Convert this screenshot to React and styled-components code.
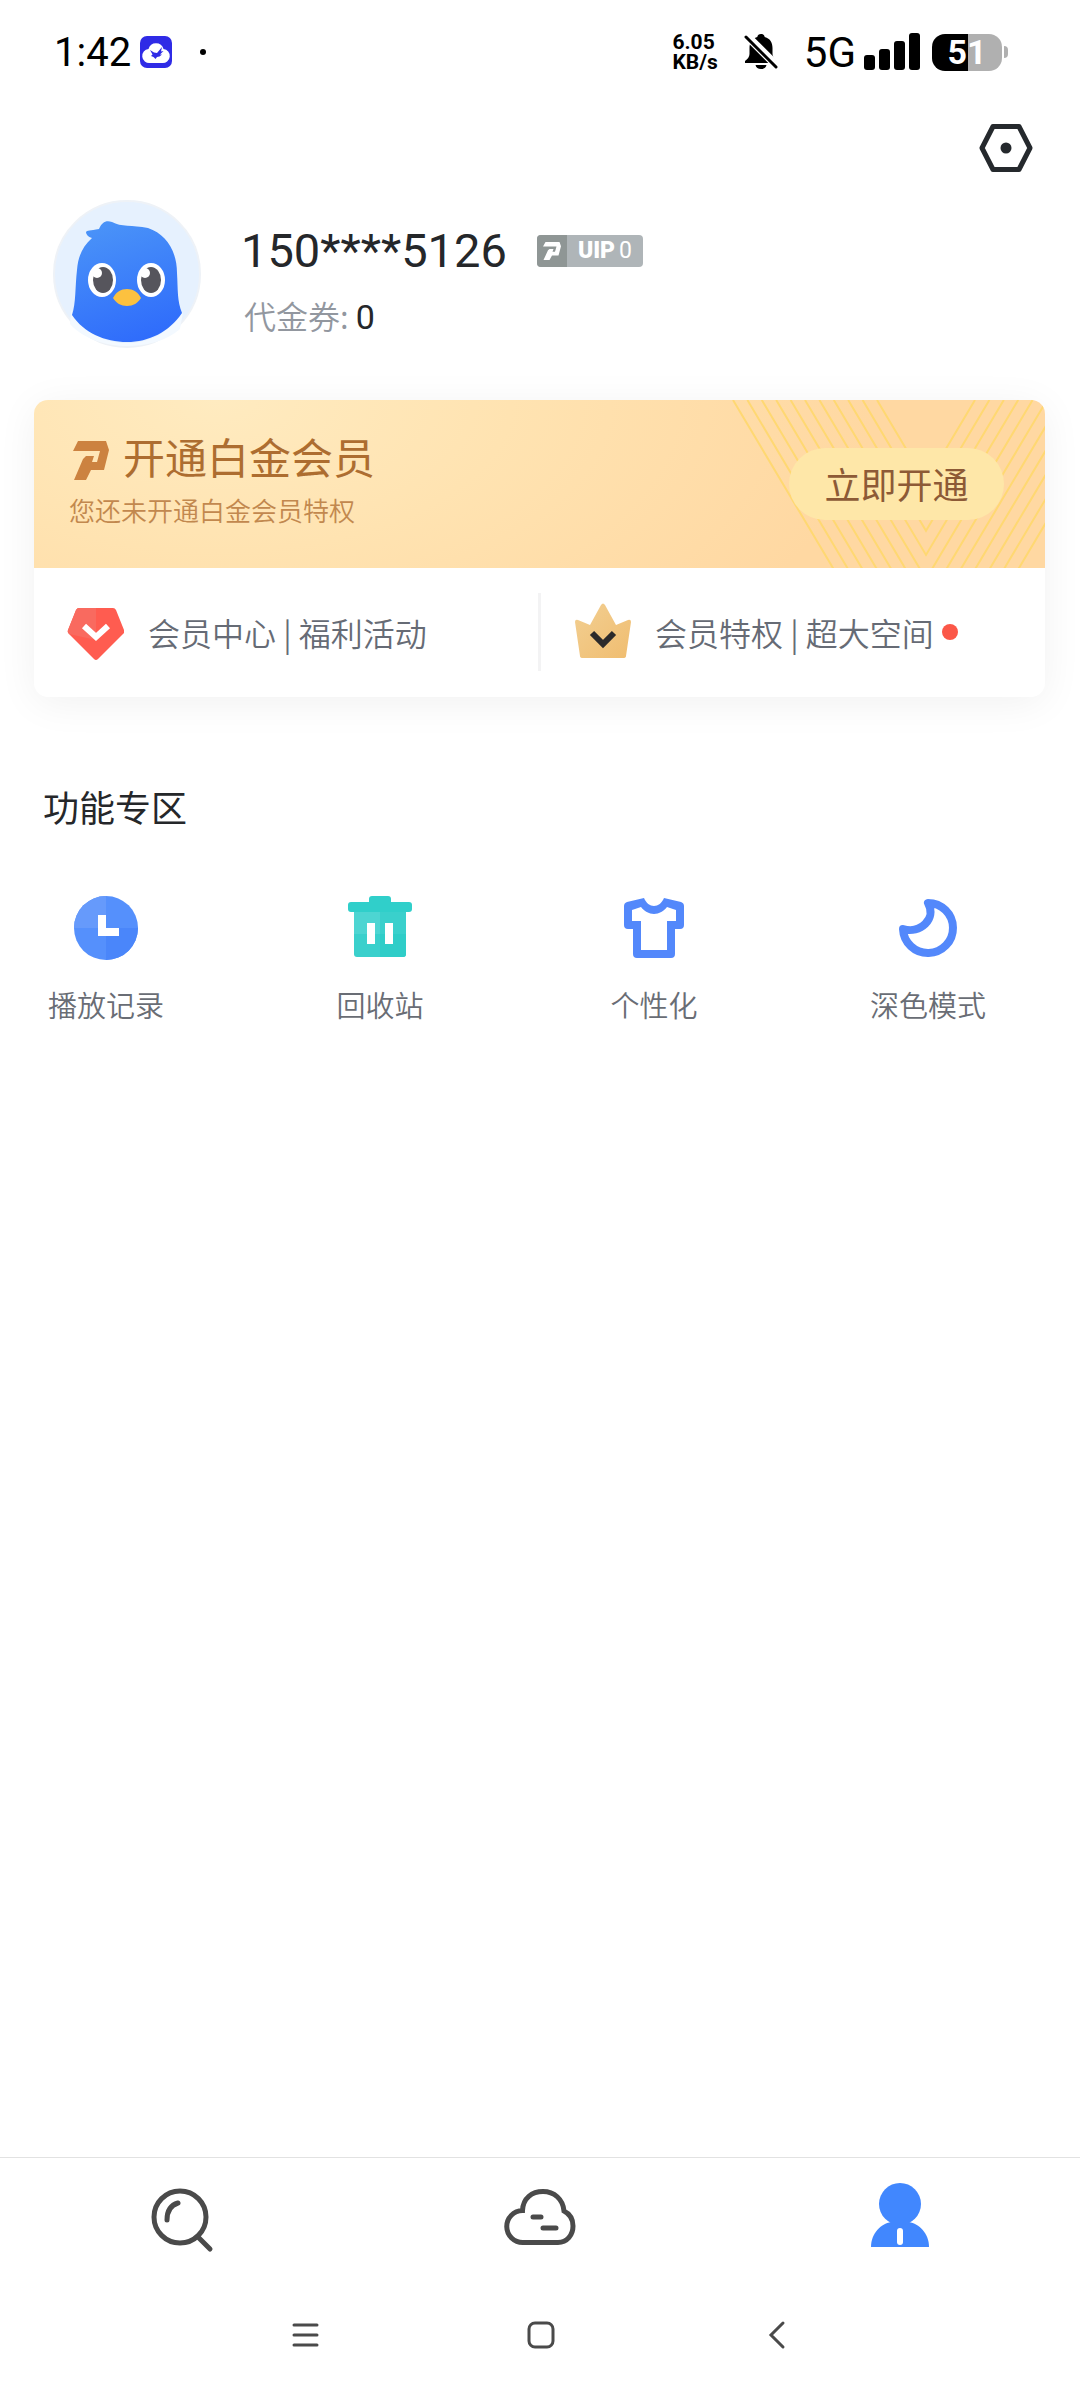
import styled, { createGlobalStyle } from "styled-components";

export default function App() {
    return (
        <>
            <GlobalStyle />
            <Page>
                <StatusBar>
                    <StatusGroup>
                        <Clock>1:42</Clock>
                        <CloudAppIcon />
                        <NoticeDot />
                    </StatusGroup>
                    <StatusGroup>
                        <Speed>
                            <span>6.05</span>
                            <span>KB/s</span>
                        </Speed>
                        <BellOffIcon />
                        <Network>5G</Network>
                        <SignalIcon />
                        <Battery>
                            <BatteryBody>51</BatteryBody>
                            <BatteryNub />
                        </Battery>
                    </StatusGroup>
                </StatusBar>

                <Toolbar>
                    <IconButton aria-label="设置">
                        <SettingsIcon />
                    </IconButton>
                </Toolbar>

                <Profile>
                    <Avatar />
                    <ProfileInfo>
                        <PhoneRow>
                            <Phone>150****5126</Phone>
                            <VipBadge>
                                <VipMark>
                                    <PMark width="18" height="18" color="#fff" />
                                </VipMark>
                                <VipText>
                                    <b>UIP</b>0
                                </VipText>
                            </VipBadge>
                        </PhoneRow>
                        <Coupon>
                            代金券: <span>0</span>
                        </Coupon>
                    </ProfileInfo>
                </Profile>

                <MemberCard>
                    <Banner>
                        <Stripes />
                        <BannerText>
                            <BannerTitle>
                                <PMark width="36" height="39" color="#cc8240" />
                                开通白金会员
                            </BannerTitle>
                            <BannerSub>您还未开通白金会员特权</BannerSub>
                        </BannerText>
                        <OpenButton>立即开通</OpenButton>
                    </Banner>
                    <MemberLinks>
                        <MemberLink href="#center">
                            <GemIcon />
                            会员中心 | 福利活动
                        </MemberLink>
                        <Divider />
                        <MemberLink href="#rights">
                            <CrownIcon />
                            <span>会员特权 | 超大空间</span>
                            <RedDot />
                        </MemberLink>
                    </MemberLinks>
                </MemberCard>

                <Section>
                    <SectionTitle>功能专区</SectionTitle>
                    <FeatureList>
                        {features.map(({ label, Icon }) => (
                            <Feature key={label}>
                                <Icon />
                                {label}
                            </Feature>
                        ))}
                    </FeatureList>
                </Section>

                <TabBar>
                    <Tab aria-label="搜索"><SearchIcon /></Tab>
                    <Tab aria-label="云盘"><CloudIcon /></Tab>
                    <Tab aria-label="我的"><PersonIcon /></Tab>
                </TabBar>
                <SystemNav>
                    <SystemButton aria-label="菜单"><MenuIcon /></SystemButton>
                    <SystemButton aria-label="主页"><HomeIcon /></SystemButton>
                    <SystemButton aria-label="返回"><BackIcon /></SystemButton>
                </SystemNav>
            </Page>
        </>
    )
}

function CloudAppIcon() {
    return (
        <svg width="32" height="32" viewBox="0 0 32 32">
            <rect width="32" height="32" rx="7" fill="#2f2be6" />
            <path d="M10 27a7 7 0 0 1-1.500-14a7.800 7.800 0 0 1 15 0A7 7 0 0 1 22 27z" fill="#fff" />
            <path d="M10 14L14 16.500L17 17L22 11L21 15.500L23.500 15L20 18.500H22L19.500 20.500L17 21L15.500 23L13.500 21L11 20L12.500 18.500z" fill="#2f2be6" />
        </svg>
    )
}

function BellOffIcon() {
    return (
        <BellSvg width="34" height="36" viewBox="0 0 34 36">
            <path d="M17 0c-2 0-3.500 1.300-3.700 3C7.500 4.600 5.500 9 5.500 14v6c0 3-2 5-4.500 7v2h32v-2c-2.500-2-4.500-4-4.500-7v-6c0-5-2-9.400-7.800-11C20.500 1.300 19 0 17 0z" fill="#000" />
            <path d="M11.500 31h11a5.600 5 0 0 1-11 0z" fill="#000" />
            <path d="M0-1L36 35" stroke="#fff" strokeWidth="8" />
            <path d="M2 3L32 33" stroke="#000" strokeWidth="3" strokeLinecap="round" />
        </BellSvg>
    )
}

function SignalIcon() {
    return (
        <SignalSvg width="56" height="38" viewBox="0 0 56 38">
            <rect x="0" y="22" width="11" height="15" rx="3" />
            <rect x="15" y="16" width="11" height="21" rx="3" />
            <rect x="30" y="8" width="11" height="29" rx="3" />
            <rect x="45" y="0" width="11" height="37" rx="3" />
        </SignalSvg>
    )
}

function SettingsIcon() {
    return (
        <svg width="54" height="48" viewBox="0 0 54 48" fill="none">
            <path d="M14 2.500h26L51 24 40 45.500H14L3 24z" stroke="#25292d" strokeWidth="5" strokeLinejoin="round" />
            <circle cx="27" cy="24" r="5.500" fill="#25292d" />
        </svg>
    )
}

function Avatar() {
    return (
        <svg width="148" height="148" viewBox="0 0 148 148">
            <defs>
                <linearGradient id="bird" x1="0.300" y1="0" x2="0.600" y2="1">
                    <stop offset="0" stopColor="#4a93f8" />
                    <stop offset="1" stopColor="#2f6cfb" />
                </linearGradient>
            </defs>
            <circle cx="74" cy="74" r="73" fill="#e6f1fe" stroke="#eef2f7" strokeWidth="2" />
            <path d="M18 110C34 134 52 143 74 143s42-10 56-31l-3 17C113 141 94 146 74 146S30 139 17 124z" fill="#f3f9ff" />
            <path d="M19 115C23 103 22 87 24 70C25 57 29 47 39 38C35 37 33 34 33 32C34 30 37 31 46 29C49 22 53 20 59 22C68 27 79 25 95 28C113 34 124 51 124 73C125 90 124 101 129 113C116 132 96 142 74 142S31 133 19 115z" fill="url(#bird)" />
            <ellipse cx="49" cy="80" rx="14" ry="17" fill="#fff" />
            <ellipse cx="98" cy="80" rx="14" ry="17" fill="#fff" />
            <ellipse cx="50" cy="80" rx="10" ry="13" fill="#56555c" />
            <ellipse cx="98" cy="80" rx="10" ry="13" fill="#56555c" />
            <circle cx="44" cy="73" r="5" fill="#fff" />
            <circle cx="92" cy="73" r="5" fill="#fff" />
            <path d="M60 98c3-6 8-9 14-9s11 3 14 9c-3 5-8 8-14 8s-11-3-14-8z" fill="#fcc13f" />
        </svg>
    )
}

function PMark({ width, height, color }) {
    return (
        <svg width={width} height={height} viewBox="0 0 36 39" preserveAspectRatio="none">
            <path d="M5 0H33L36 9L31 29H18L13 39H1L10 18L13 15H21L19 21H24L27 10H0z" fill={color} />
        </svg>
    )
}

function Stripes() {
    // nested V lines sharing one axis at x = 203
    const starts = Array.from({ length: 11 }, (_, i) => 10 + i * 14.4)
    return (
        <StripesSvg width="322" height="168" viewBox="0 0 322 168" fill="none" stroke="#ffd872" strokeWidth="2">
            {starts.map((x) => (
                <path key={x} d={`M${x} 0L203 ${(203 - x) * 1.68}L${406 - x} 0`} />
            ))}
        </StripesSvg>
    )
}

function GemIcon() {
    return (
        <svg width="58" height="58" viewBox="-1 -4 58 58">
            <path d="M12 1h34q2 0 3 2l8 20q1 2-1 4L31 52q-2 2-4 0L2 27q-2-2-1-4L9 3q1-2 3-2z" fill="#ff5c50" />
            <path d="M29 1H12q-2 0-3 2L1 23q-1 2 1 4l27 6z" fill="#f96a5f" />
            <path d="M17 19l12 11 12-11" fill="none" stroke="#fff" strokeWidth="6" />
        </svg>
    )
}

function CrownIcon() {
    return (
        <svg width="58" height="58" viewBox="-1 0 58 58">
            <defs>
                <linearGradient id="crown" x1="0" y1="0" x2="1" y2="1">
                    <stop offset="0" stopColor="#f2cf92" />
                    <stop offset="1" stopColor="#f0bd70" />
                </linearGradient>
            </defs>
            <path d="M27 2q2-3 4 0l11 20 12-5q3-1 3 2l-5 34q0 2-3 2H9q-3 0-3-2L1 19q0-3 3-2l12 5z" fill="url(#crown)" />
            <path d="M18 30l11 11 11-11" fill="none" stroke="#2c2a2a" strokeWidth="6" />
        </svg>
    )
}

function HistoryIcon() {
    return (
        <svg width="64" height="64" viewBox="0 0 64 64">
            <circle cx="32" cy="32" r="32" fill="#5590fc" />
            <path d="M32 0A32 32 0 0 0 0 32H32z" fill="#669afb" />
            <path d="M32 32H64A32 32 0 0 1 32 64z" fill="#4a86fa" />
            <path d="M24 19h8v13h13v8H24z" fill="#fff" />
        </svg>
    )
}

function TrashIcon() {
    return (
        <svg width="64" height="64" viewBox="0 0 64 64">
            <rect x="21" y="0" width="22" height="12" rx="3" fill="#30cfca" />
            <rect x="6" y="10" width="52" height="51" rx="3" fill="#3ad0cc" />
            <path d="M6 14h26v24H6z" fill="#4dd5d2" />
            <path d="M32 38h26v20q0 3-3 3H32z" fill="#2fcdc8" />
            <rect x="0" y="6" width="64" height="10" rx="3" fill="#30cfca" />
            <path d="M19 27h8v21h-8zM37 27h8v21h-8z" fill="#fff" />
        </svg>
    )
}

function ShirtIcon() {
    return (
        <svg width="64" height="64" viewBox="0 0 64 64">
            <path
                fill="#5388fb"
                fillRule="evenodd"
                d="M22 2C24 7 28 10 32 10S40 7 42 2L59 6Q62 7 62 10V29Q62 33 58 33H53V58Q53 62 49 62H15Q11 62 11 58V33H6Q2 33 2 29V10Q2 7 5 6zM19 11L10 14V25H19V54H45V25H54V14L45 11C42 15 37 18 32 18S22 15 19 11z"
            />
        </svg>
    )
}

function MoonIcon() {
    return (
        <svg width="64" height="64" viewBox="0 0 64 64" fill="none" stroke="#5388fb" strokeWidth="8" strokeLinejoin="round">
            <path d="M32 7A25 25 0 1 1 7 33C24 38 41 23 32 7z" />
        </svg>
    )
}

function SearchIcon() {
    return (
        <svg width="72" height="72" viewBox="0 0 72 72" fill="none" stroke="#4a4a4a" strokeWidth="5" strokeLinecap="round">
            <circle cx="36" cy="33" r="26" />
            <path d="M23 36C23 27 27 21 34 19" />
            <path d="M54 53L66 65" />
        </svg>
    )
}

function CloudIcon() {
    return (
        <svg width="72" height="72" viewBox="0 0 72 72" fill="none" stroke="#4a4a4a" strokeWidth="5" strokeLinecap="round">
            <path d="M19 58.500A16 16 0 0 1 18.500 26.500C19 14 28 7.500 39 7.500S59 15 60 27C66 30 69 36 69 42C69 51 63 58.500 54 58.500z" />
            <path d="M29 33h8M39 44h13" />
        </svg>
    )
}

function PersonIcon() {
    return (
        <svg width="72" height="72" viewBox="0 0 72 72" fill="#4187fe" overflow="visible">
            <circle cx="36" cy="20" r="21" />
            <path d="M7 63C7 49 17 40 27 38H45C55 40 65 49 65 63z" />
            <rect x="33" y="44" width="6" height="17" rx="3" fill="#fff" />
        </svg>
    )
}

function MenuIcon() {
    return (
        <svg width="32" height="32" viewBox="0 0 32 32" stroke="#4a4a4a" strokeWidth="3" strokeLinecap="round">
            <path d="M5 6h23M5 16h23M5 26h23" />
        </svg>
    )
}

function HomeIcon() {
    return (
        <svg width="32" height="32" viewBox="0 0 32 32">
            <rect x="4" y="4" width="24" height="24" rx="6" fill="none" stroke="#4a4a4a" strokeWidth="3" />
        </svg>
    )
}

function BackIcon() {
    return (
        <svg width="32" height="32" viewBox="0 0 32 32" fill="none" stroke="#4a4a4a" strokeWidth="3" strokeLinecap="round">
            <path d="M22 4L10 16L22 28" />
        </svg>
    )
}

const features = [
    { label: "播放记录", Icon: HistoryIcon },
    { label: "回收站", Icon: TrashIcon },
    { label: "个性化", Icon: ShirtIcon },
    { label: "深色模式", Icon: MoonIcon },
]

const GlobalStyle = createGlobalStyle`
    * {
        box-sizing: border-box;
    }

    body {
        margin: 0;
        background: #fff;
        font-family: Roboto, "Noto Sans CJK SC", sans-serif;
    }

    button {
        border: none;
        padding: 0;
        background: none;
        font-family: inherit;
    }

    svg {
        display: block;
        flex-shrink: 0;
    }
`

const Page = styled.div`
    min-height: 100vh;
    display: flex;
    flex-direction: column;
`

const StatusBar = styled.header`
    display: flex;
    justify-content: space-between;
    align-items: center;
    height: 104px;
    padding: 0 72px 0 54px;
    color: #000;
`

const StatusGroup = styled.div`
    display: flex;
    align-items: center;
`

const Clock = styled.span`
    margin-right: 9px;
    font-size: 40px;
`

const NoticeDot = styled.span`
    width: 6px;
    height: 6px;
    margin-left: 28px;
    border-radius: 50%;
    background: #000;
`

const Speed = styled.div`
    display: flex;
    flex-direction: column;
    font-size: 21px;
    font-weight: 700;
    line-height: 20px;
`

const BellSvg = styled.svg`
    margin: 0 26px;
`

const Network = styled.span`
    font-size: 42px;
`

const SignalSvg = styled.svg`
    margin: 0 12px 0 8px;
`

const Battery = styled.div`
    display: flex;
    align-items: center;
    gap: 2px;
`

const BatteryBody = styled.div`
    width: 70px;
    height: 37px;
    border-radius: 13px;
    background: linear-gradient(90deg, #000 51%, #b0b0b0 51%);
    color: #fff;
    font-size: 34px;
    font-weight: 700;
    line-height: 37px;
    text-align: center;
`

const BatteryNub = styled.span`
    width: 4px;
    height: 12px;
    border-radius: 0 6px 6px 0;
    background: #b0b0b0;
`

const Toolbar = styled.div`
    display: flex;
    justify-content: flex-end;
    padding: 20px 47px 0;
`

const IconButton = styled.button`
    display: block;
`

const Profile = styled.section`
    display: flex;
    gap: 40px;
    padding: 28px 53px 0;
`

const ProfileInfo = styled.div`
    display: flex;
    flex-direction: column;
    gap: 10px;
    padding-top: 21px;
`

const PhoneRow = styled.div`
    display: flex;
    align-items: center;
    gap: 30px;
`

const Phone = styled.h1`
    margin: 0;
    color: #25272a;
    font-size: 47px;
    font-weight: 400;
    line-height: 60px;
`

const VipBadge = styled.div`
    display: flex;
    height: 32px;
    border-radius: 4px;
    overflow: hidden;
    background: #afb5b8;
    color: #fff;
`

const VipMark = styled.span`
    display: flex;
    align-items: center;
    justify-content: center;
    width: 30px;
    background: #8f9695;
`

const VipText = styled.span`
    padding: 0 11px;
    font-size: 23px;
    line-height: 32px;

    b {
        margin-right: 4px;
        font-weight: 900;
    }
`

const Coupon = styled.p`
    margin: 0;
    padding-left: 3px;
    color: #92979f;
    font-family: "Noto Sans CJK SC", sans-serif;
    font-size: 32px;
    font-weight: 350;
    line-height: 48px;

    span {
        color: #25272a;
        font-family: Roboto, sans-serif;
        font-size: 34px;
        font-weight: 400;
    }
`

const MemberCard = styled.section`
    margin: 52px 35px 0 34px;
    border-radius: 14px;
    overflow: hidden;
    background: #fff;
    box-shadow: 0 6px 40px rgba(0, 0, 0, 0.06);
`

const Banner = styled.div`
    position: relative;
    display: flex;
    justify-content: space-between;
    align-items: center;
    height: 168px;
    padding: 0 41px 0 35px;
    background: radial-gradient(ellipse 65% 200% at 18% 0%, #ffebc0 0%, #ffe3b1 45%, #ffd8a2 100%);
`

/* line pattern behind the banner button */
const StripesSvg = styled.svg`
    position: absolute;
    top: 0;
    right: 0;
`

const BannerText = styled.div`
    display: flex;
    flex-direction: column;
    gap: 4px;
    padding-bottom: 4px;
`

const BannerTitle = styled.h2`
    display: flex;
    align-items: center;
    gap: 14px;
    margin: 0;
    padding-left: 4px;
    color: #ad6d30;
    font-size: 42px;
    font-weight: 400;
    line-height: 56px;
`

const BannerSub = styled.p`
    margin: 0;
    color: #c2884e;
    font-size: 26px;
    font-weight: 350;
    line-height: 40px;
`

const OpenButton = styled.button`
    position: relative;
    width: 215px;
    height: 72px;
    padding-bottom: 3px;
    border-radius: 36px;
    background: #fee7a8;
    color: #8d5a36;
    font-size: 36px;
`

const MemberLinks = styled.div`
    display: flex;
    align-items: center;
    height: 129px;
    padding-bottom: 2px;
`

const MemberLink = styled.a`
    flex: 1;
    display: flex;
    align-items: center;
    gap: 24px;
    padding-left: 32px;
    color: #666b75;
    font-family: "Noto Sans CJK SC", sans-serif;
    font-size: 32px;
    font-weight: 350;
    text-decoration: none;
    white-space: nowrap;
`

const Divider = styled.span`
    width: 3px;
    height: 78px;
    background: #f3f3f4;
`

const RedDot = styled.span`
    width: 16px;
    height: 16px;
    margin-left: -16px;
    border-radius: 50%;
    background: #fb5748;
`

const Section = styled.section`
    flex: 1;
    padding-top: 83px;
`

const SectionTitle = styled.h2`
    margin: 0;
    padding-left: 43px;
    color: #25272a;
    font-size: 36px;
    font-weight: 400;
    line-height: 60px;
`

const FeatureList = styled.div`
    display: flex;
    justify-content: space-between;
    padding: 56px 94px 0 48px;
`

const Feature = styled.button`
    display: flex;
    flex-direction: column;
    align-items: center;
    gap: 25px;
    width: 116px;
    color: #696d75;
    font-size: 29px;
    font-weight: 350;
    line-height: 44px;
    white-space: nowrap;
`

const TabBar = styled.nav`
    display: flex;
    height: 124px;
    border-top: 1px solid #e2e2e2;
`

const Tab = styled.button`
    flex: 1;
    display: flex;
    align-items: center;
    justify-content: center;
`

const SystemNav = styled.nav`
    display: flex;
    align-items: center;
    justify-content: center;
    gap: 204px;
    height: 119px;
    padding: 0 0 12px 2px;
`

const SystemButton = styled.button`
    display: block;
`
